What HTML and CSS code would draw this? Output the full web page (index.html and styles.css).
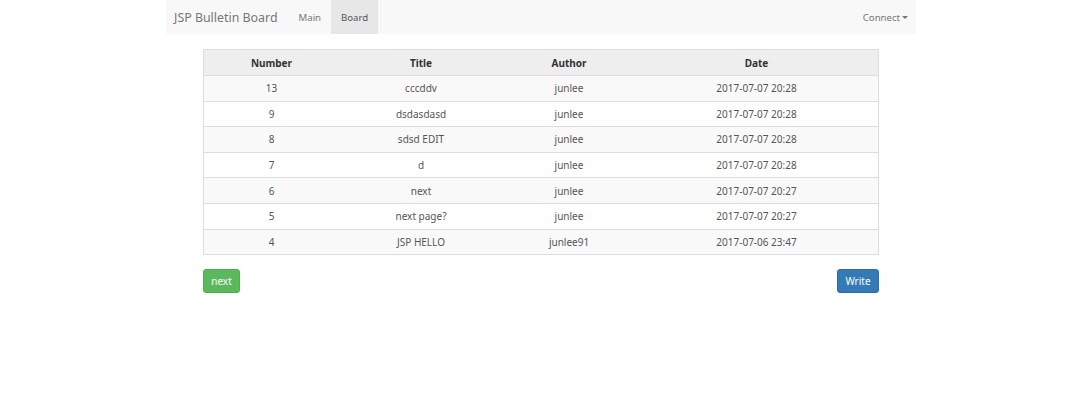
FILE: index.html
```html
<!DOCTYPE html>
<html>
<head>
<meta charset="utf-8">
<title>JSP Bulletin Board</title>
<link rel="stylesheet" href="styles.css">
</head>
<body>
<nav class="navbar">
  <div class="nav-left">
    <a class="brand">JSP Bulletin Board</a>
    <a class="nav-link">Main</a>
    <a class="nav-link active">Board</a>
  </div>
  <a class="nav-link dropdown">Connect<span class="caret"></span></a>
</nav>
<main class="content">
  <table class="board">
    <thead>
      <tr><th class="c-num">Number</th><th class="c-title">Title</th><th class="c-author">Author</th><th class="c-date">Date</th></tr>
    </thead>
    <tbody>
      <tr><td>13</td><td>cccddv</td><td>junlee</td><td>2017-07-07 20:28</td></tr>
      <tr><td>9</td><td>dsdasdasd</td><td>junlee</td><td>2017-07-07 20:28</td></tr>
      <tr><td>8</td><td>sdsd EDIT</td><td>junlee</td><td>2017-07-07 20:28</td></tr>
      <tr><td>7</td><td>d</td><td>junlee</td><td>2017-07-07 20:28</td></tr>
      <tr><td>6</td><td>next</td><td>junlee</td><td>2017-07-07 20:27</td></tr>
      <tr><td>5</td><td>next page?</td><td>junlee</td><td>2017-07-07 20:27</td></tr>
      <tr><td>4</td><td>JSP HELLO</td><td>junlee91</td><td>2017-07-06 23:47</td></tr>
    </tbody>
  </table>
  <div class="actions">
    <a class="btn btn-success">next</a>
    <a class="btn btn-primary">Write</a>
  </div>
</main>
</body>
</html>
```
FILE: styles.css
```css
html, body {
  margin: 0;
  padding: 0;
  background: #fff;
  font-family: "Noto Sans", "Open Sans", sans-serif;
  color: #333;
}
.navbar {
  width: 750px;
  height: 34px;
  margin: 0 auto;
  background: #f8f8f8;
  display: flex;
  justify-content: space-between;
  align-items: stretch;
  box-sizing: border-box;
}
.nav-left {
  display: flex;
  align-items: stretch;
}
.brand {
  display: flex;
  align-items: center;
  padding: 0 11px 0 8px;
  font-size: 12.4px;
  color: #777;
}
.nav-link {
  display: flex;
  align-items: center;
  padding: 0 10px;
  font-size: 9.6px;
  color: #777;
}
.nav-link.active {
  background: #e7e7e7;
  color: #555;
}
.dropdown {
  padding-right: 8px;
}
.caret {
  display: inline-block;
  width: 0;
  height: 0;
  margin-left: 2px;
  border-top: 3px solid #777;
  border-left: 3px solid transparent;
  border-right: 3px solid transparent;
}
.content {
  width: 676px;
  margin: 15px auto 0;
}
.board {
  width: 676px;
  border-collapse: collapse;
  border: 1px solid #ddd;
  font-size: 10px;
  table-layout: fixed;
}
.board th, .board td {
  text-align: center;
  padding: 0;
  border-top: 1px solid #ddd;
}
.board th {
  height: 25px;
  background: #eeeeee;
  font-weight: bold;
  color: #333;
}
.board td {
  height: 24.6px;
  color: #555;
}
.board tbody tr:nth-child(odd) td {
  background: #f9f9f9;
}
.c-num { width: 135px; }
.c-title { width: 164px; }
.c-author { width: 132px; }
.c-date { width: 243px; }
.actions {
  display: flex;
  justify-content: space-between;
  margin-top: 14px;
}
.btn {
  display: inline-flex;
  align-items: center;
  justify-content: center;
  height: 24px;
  box-sizing: border-box;
  padding: 0 10px;
  font-size: 10px;
  color: #fff;
  border-radius: 3px;
  border: 1px solid transparent;
}
.btn-success {
  background: #5cb85c;
  border-color: #4cae4c;
  width: 37px;
}
.btn-primary {
  background: #337ab7;
  border-color: #2e6da4;
  width: 42px;
}
```
